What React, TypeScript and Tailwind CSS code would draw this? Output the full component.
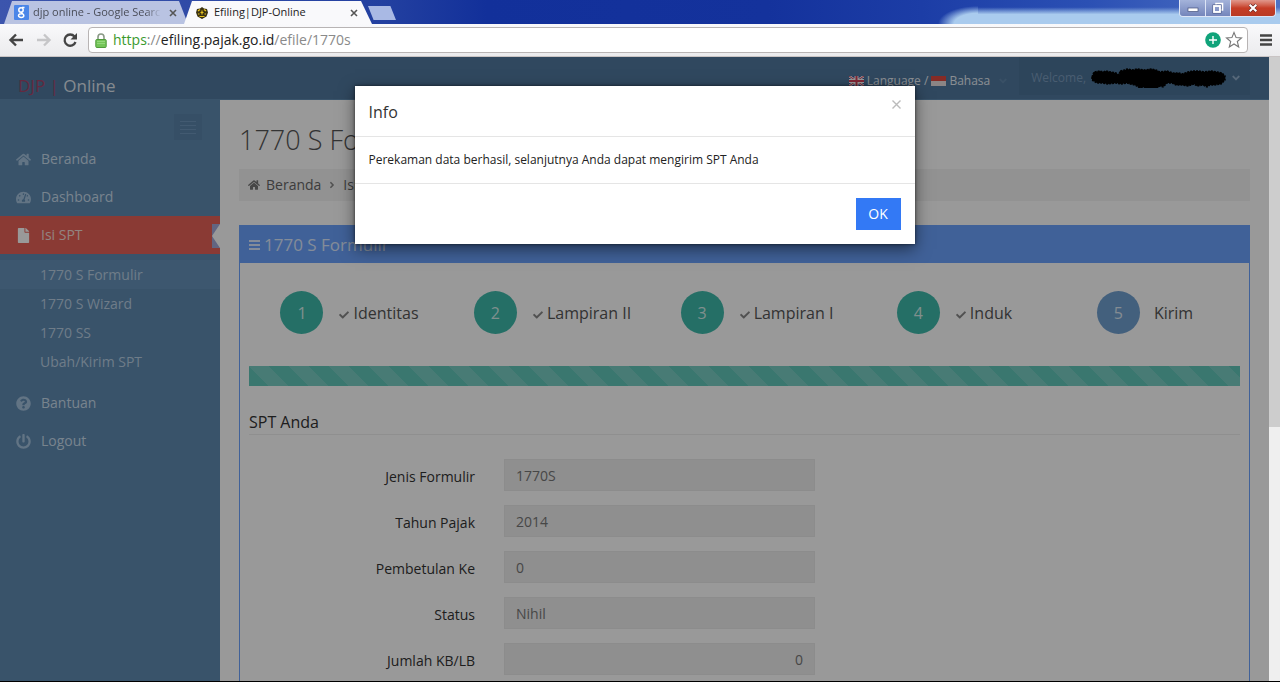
import { useState } from 'react';
import type { ReactNode } from 'react';
import {
  FaAngleDown,
  FaAngleRight,
  FaCheck,
  FaFile,
  FaHome,
  FaPowerOff,
  FaQuestionCircle,
  FaTachometerAlt,
} from 'react-icons/fa';

const steps = [
  { label: 'Identitas', done: true },
  { label: 'Lampiran II', done: true },
  { label: 'Lampiran I', done: true },
  { label: 'Induk', done: true },
  { label: 'Kirim', done: false },
];

const fields = [
  { id: 'jenis', label: 'Jenis Formulir', value: '1770S' },
  { id: 'tahun', label: 'Tahun Pajak', value: '2014' },
  { id: 'pembetulan', label: 'Pembetulan Ke', value: '0' },
  { id: 'status', label: 'Status', value: 'Nihil' },
  { id: 'jumlah', label: 'Jumlah KB/LB', value: '0', alignRight: true },
];

const submenu = ['1770 S Formulir', '1770 S Wizard', '1770 SS', 'Ubah/Kirim SPT'];

function CloseGlyph() {
  return (
    <svg viewBox="0 0 8 8" className="size-2" fill="none" stroke="#555" strokeWidth="1.6">
      <path d="M1 1l6 6M7 1L1 7" />
    </svg>
  );
}

function TabStrip() {
  return (
    <div className="flex h-6 items-end justify-between bg-[linear-gradient(90deg,#3c55ad_0%,#2340a0_30%,#12309a_38%,#14329c_60%,#1c3da6_72%,#2b50b4_85%,#4f72c4_100%)]">
      <div className="flex items-end">
        <div className="ml-1 flex h-[23px] w-[184px] items-center bg-[#b9c3e2] pl-2.5 text-[#4a4d58] [clip-path:polygon(8px_0,175px_0,100%_100%,0_100%)]">
          <svg viewBox="0 0 15 15" className="mr-1 size-[15px] shrink-0">
            <rect width="15" height="15" rx="1" fill="#4a86e8" />
            <g fill="none" stroke="#fff" strokeWidth="1.5">
              <circle cx="7" cy="5" r="2.2" />
              <path d="M8 2.5h2.5M8 7.2c-1.5 1 1.8 1.5 1.8 3.3 0 2.6-5.3 2.6-5.3 0 0-1.5 2-2 4.2-1.8" />
            </g>
          </svg>
          <span className="w-[128px] overflow-hidden text-[11px] whitespace-nowrap [mask-image:linear-gradient(90deg,#000_88%,transparent)]">
            djp online - Google Search
          </span>
          <button aria-label="Close tab" className="ml-2">
            <CloseGlyph />
          </button>
        </div>
        <div className="-ml-1 flex h-[23px] w-[188px] items-center bg-[#f9f9fb] pl-3 text-[#222] [clip-path:polygon(8px_0,177px_0,100%_100%,0_100%)]">
          <svg viewBox="0 0 12 12" className="mr-1.5 size-3 shrink-0">
            <path d="M6 0l2 1.5 3 .5 1 3.5-1.5 4L6 12 1.5 9.500 0 5.500 1 2l3-.5z" fill="#3b3210" />
            <path d="M2 4l2-1.500M8 2.500L10 4M2 7h1.500M8.500 7H10M3.500 9.500h5M6 3.500v4M4.500 5.500h3" stroke="#e8c21c" strokeWidth="1.200" fill="none" />
          </svg>
          <span className="w-[128px] text-[11px] whitespace-nowrap">Efiling|DJP-Online</span>
          <button aria-label="Close tab" className="ml-2">
            <CloseGlyph />
          </button>
        </div>
        <button
          aria-label="New tab"
          className="mb-1 -ml-1 h-3.5 w-7 bg-[#a9b9e4] [clip-path:polygon(0_0,80%_0,100%_100%,20%_100%)]"
        />
      </div>
      <div className="flex h-6 w-[342px] items-start justify-end bg-[radial-gradient(ellipse_40px_18px_at_40px_24px,#a9cbee_60%,transparent),linear-gradient(180deg,transparent_30%,#a9cbee_60%)] [background-size:40px_100%,100%_100%] bg-no-repeat [background-position:0_0,40px_0] pr-1">
        <div className="flex h-[17px] overflow-hidden rounded-b border border-t-0 border-[#dce4f5]">
          <button aria-label="Minimize" className="flex w-[26px] items-center justify-center border-r border-[#dce4f5] bg-linear-to-b from-[#a4b3da] to-[#7485bb]">
            <svg viewBox="0 0 12 12" className="size-3">
              <rect x="1" y="6" width="10" height="3.5" fill="#fff" stroke="#45507c" strokeWidth=".7" />
            </svg>
          </button>
          <button aria-label="Restore" className="flex w-[25px] items-center justify-center border-r border-[#dce4f5] bg-linear-to-b from-[#a4b3da] to-[#7485bb]">
            <svg viewBox="0 0 12 12" className="size-3" fill="none">
              <path d="M4 3.5V1.500h6.500v6.500H8.500" stroke="#fff" strokeWidth="1.600" />
              <rect x="2" y="4" width="6" height="6" stroke="#fff" strokeWidth="1.900" />
              <rect x=".8" y="2.800" width="8.400" height="8.400" stroke="#45507c" strokeWidth=".5" />
            </svg>
          </button>
          <button aria-label="Close" className="flex w-11 items-center justify-center bg-linear-to-b from-[#e0988c] via-[#c63d26] to-[#b93a24]">
            <svg viewBox="0 0 12 12" className="size-2.5">
              <path d="M2 2l8 8M10 2l-8 8" stroke="#5c2320" strokeWidth="4" />
              <path d="M2 2l8 8M10 2l-8 8" stroke="#fff" strokeWidth="2.600" />
            </svg>
          </button>
        </div>
      </div>
    </div>
  );
}

function Toolbar() {
  return (
    <div className="flex h-[33px] items-center border-b border-[#c9c4c4] bg-linear-to-b from-[#f9f9fb] to-[#ebebed] pr-2 pl-2">
      <button aria-label="Back">
        <svg viewBox="0 0 16 16" className="size-4" fill="none" stroke="#444" strokeWidth="2.400">
          <path d="M15 8H3M8 2.500L2.500 8 8 13.500" />
        </svg>
      </button>
      <button aria-label="Forward" className="ml-3">
        <svg viewBox="0 0 16 16" className="size-4" fill="none" stroke="#c6c6c8" strokeWidth="2.400">
          <path d="M1 8h12M8 2.500L13.500 8 8 13.500" />
        </svg>
      </button>
      <button aria-label="Reload" className="ml-2.5">
        <svg viewBox="0 0 16 16" className="size-4" fill="none">
          <path d="M12.500 4.500A5.600 5.600 0 1 0 13.500 10" stroke="#444" strokeWidth="2.300" />
          <path d="M15 1v6.500H8.500z" fill="#444" />
        </svg>
      </button>
      <div className="ml-2.5 flex h-[26px] flex-1 items-center rounded-sm border border-[#b8b4b4] bg-white pr-1 pl-1.5">
        <svg viewBox="0 0 12 15" className="h-[15px] w-3">
          <path d="M3 7V4a3 3 0 0 1 6 0v3" fill="none" stroke="#8a9a86" strokeWidth="1.600" />
          <rect x=".8" y="6.500" width="10.400" height="8" rx="1" fill="#74c558" stroke="#4f9a3b" />
          <path d="M2 8.500h8M2 10.500h8" stroke="#9bdc84" strokeWidth=".8" />
        </svg>
        <div className="ml-1.5 flex-1 text-sm text-[#8a8a8a]">
          <span className="text-[#3a9a2c]">https</span>://<span className="text-[#222]">efiling.pajak.go.id</span>/efile/1770s
        </div>
        <svg viewBox="0 0 16 16" className="mr-1 size-4">
          <circle cx="8" cy="8" r="7.800" fill="#10a37a" />
          <path d="M8 4v8M4 8h8" stroke="#fff" strokeWidth="1.400" />
        </svg>
        <svg viewBox="0 0 18 18" className="size-[18px]">
          <path d="M9 1.500l2.100 5.100 5.400.4-4.200 3.500 1.400 5.500L9 13l-4.700 3 1.400-5.500L1.500 7l5.400-.4z" fill="#fff" stroke="#777" strokeWidth="1.100" />
        </svg>
      </div>
      <button aria-label="Menu" className="ml-3">
        <svg viewBox="0 0 12 12" className="size-3" stroke="#444" strokeWidth="2.400">
          <path d="M0 1.500h12M0 6h12M0 10.500h12" />
        </svg>
      </button>
    </div>
  );
}

function FlagUk() {
  return (
    <svg viewBox="0 0 15 10" className="h-2.5 w-[15px]">
      <rect width="15" height="10" fill="#39539c" />
      <path d="M0 0l15 10M15 0L0 10" stroke="#fff" strokeWidth="2.500" />
      <path d="M0 0l15 10M15 0L0 10" stroke="#d8425a" strokeWidth="1" />
      <path d="M7.500 0v10M0 5h15" stroke="#fff" strokeWidth="4" />
      <path d="M7.500 0v10M0 5h15" stroke="#d8425a" strokeWidth="2" />
    </svg>
  );
}

function FlagId() {
  return (
    <svg viewBox="0 0 15 10" className="h-2.5 w-[15px]">
      <rect width="15" height="10" fill="#e8dede" />
      <rect width="15" height="5" fill="#e0483f" />
    </svg>
  );
}

function Header() {
  return (
    <header className="flex h-[43px] items-start justify-between border-b border-[#5f8ab1] bg-[#50789e] pr-[19px] pl-[18px]">
      <a href="#" className="pt-[17px] text-[17px] leading-6 text-[#dfe6ee]">
        <span className="text-[#a4466c]">DJP |</span> Online
      </a>
      <div className="flex">
        <button className="flex h-[38px] items-center gap-[3px] pt-2.5 pr-2.5 text-xs text-[#e6edf5]">
          <FlagUk />
          <span>Language /</span>
          <FlagId />
          <span>Bahasa</span>
          <FaAngleDown className="ml-1 size-3 text-[#6086aa]" />
        </button>
        <button className="flex h-[38px] items-center bg-[#4c7498] pt-1 pr-2 pl-3 text-xs text-[#7b9bbd]">
          <span>Welcome,</span>
          <svg viewBox="0 0 138 20" className="mr-0.5 ml-1 h-5 w-[138px]">
            <path
              d="M2 9l2-5 6-1 3 1 3-1 5 1 5 1 3 2 1-4 5-1 2-1 6 1 4-1 8 1 6-1 5 1 4 2 7-1 6 2 6 0 3 1 6-2 5-1 6 0 5 1 7-1 6 1 5 1 3 3 0 4-4 4-7 1-4 0-3 2-4-2-6 1-3-2-6 2-6-1-6 0-4-2-5 0-4 4-3-1-4 3-6-1-3 2-3-3-4 1-5-3-5-1-3-1-6 1-5-1-8 1-6-1-5 0-5-3z"
              fill="#000"
              stroke="#000"
              strokeWidth="1.500"
              strokeDasharray="2 1"
            />
          </svg>
          <FaAngleDown className="size-3 text-[#91aecb]" />
        </button>
      </div>
    </header>
  );
}

function MenuItem({ icon, label, active }: { icon: ReactNode; label: string; active?: boolean }) {
  return (
    <a
      href="#"
      className={
        active
          ? 'relative flex h-[38px] items-center gap-2.5 bg-[#e76257] pl-4 text-sm text-[#f4dcd8]'
          : 'flex h-[38px] items-center gap-2.5 pl-4 text-sm text-[#c9dcec]'
      }
    >
      <span className={active ? 'text-[#fff]' : 'text-[#a3c1dc]'}>{icon}</span>
      {label}
      {active && (
        <svg viewBox="0 0 8 24" className="absolute top-2 right-0 h-6 w-2">
          <rect width="8" height="24" fill="#a3a8d8" />
          <path d="M8 0v24L0 12z" fill="#fff" />
        </svg>
      )}
    </a>
  );
}

function Sidebar() {
  return (
    <nav className="w-[220px] shrink-0 bg-[#5f8ab1]">
      <div className="flex h-10 justify-end pt-3.5 pr-[18px]">
        <button aria-label="Toggle menu" className="flex h-[26px] w-7 items-center justify-center bg-[#5a84ab]">
          <svg viewBox="0 0 16 13" className="h-[13px] w-4" stroke="#6f97bd">
            <path d="M0 .5h16M0 4.500h16M0 8.500h16M0 12.500h16" />
          </svg>
        </button>
      </div>
      <MenuItem icon={<FaHome className="size-[15px]" />} label="Beranda" />
      <MenuItem icon={<FaTachometerAlt className="size-[15px]" />} label="Dashboard" />
      <MenuItem icon={<FaFile className="size-[15px]" />} label="Isi SPT" active />
      <ul className="pt-1.5 pb-2 text-sm text-[#b9cfe3]">
        {submenu.map((item, i) => (
          <li key={item}>
            <a href="#" className={i === 0 ? 'flex h-[29px] items-center bg-[#6792b9] pl-10' : 'flex h-[29px] items-center pl-10'}>
              {item}
            </a>
          </li>
        ))}
      </ul>
      <MenuItem icon={<FaQuestionCircle className="size-[15px]" />} label="Bantuan" />
      <MenuItem icon={<FaPowerOff className="size-[15px]" />} label="Logout" />
    </nav>
  );
}

function Wizard() {
  return (
    <ol className="grid grid-cols-[201fr_205fr_204fr_191fr_190fr] pt-7">
      {steps.map((step, i) => (
        <li key={step.label} className="flex items-center justify-center text-base text-[#555]">
          <span
            className={
              step.done
                ? 'mr-4 flex size-[43px] items-center justify-center rounded-full bg-[#3eb9aa] text-[#d5efec]'
                : 'mr-3.5 flex size-[43px] items-center justify-center rounded-full bg-[#70a0d0] text-[#dce8f4]'
            }
          >
            {i + 1}
          </span>
          {step.done && <FaCheck className="mt-1 mr-1 size-2.5 text-[#888]" />}
          {step.label}
        </li>
      ))}
    </ol>
  );
}

function FormPanel() {
  return (
    <section className="mt-6 flex-1 border border-b-0 border-[#6ca2fd]">
      <h2 className="flex h-[37px] items-center gap-1 bg-[#6ca2fd] pl-[9px] text-[17px] text-[#dce9ff]">
        <svg viewBox="0 0 11 10" className="h-2.5 w-[11px]" stroke="#dce9ff" strokeWidth="2">
          <path d="M0 1h11M0 5h11M0 9h11" />
        </svg>
        1770 S Formulir
      </h2>
      <div className="px-[9px]">
        <Wizard />
        <div
          role="progressbar"
          aria-valuenow={100}
          className="mt-8 h-5 bg-[#62c6b9] bg-[linear-gradient(45deg,rgba(255,255,255,.15)_25%,transparent_25%,transparent_50%,rgba(255,255,255,.15)_50%,rgba(255,255,255,.15)_75%,transparent_75%,transparent)] bg-[size:40px_40px]"
        />
        <h3 className="mt-6 border-b border-[#eee] text-base text-[#333]">SPT Anda</h3>
        <form className="mt-6 flex flex-col gap-3.5 pb-[5px]">
          {fields.map((field) => (
            <div key={field.id} className="grid grid-cols-[226fr_311fr_396fr] gap-x-[29px]">
              <label htmlFor={field.id} className="pt-2 text-right text-sm text-[#333]">
                {field.label}
              </label>
              <input
                id={field.id}
                readOnly
                value={field.value}
                className={
                  field.alignRight
                    ? 'h-8 w-full min-w-0 border border-[#e9e9e9] bg-[#eee] px-[11px] text-right text-sm text-[#777]'
                    : 'h-8 w-full min-w-0 border border-[#e9e9e9] bg-[#eee] px-[11px] text-sm text-[#777]'
                }
              />
            </div>
          ))}
        </form>
      </div>
    </section>
  );
}

function InfoDialog({ onClose }: { onClose: () => void }) {
  return (
    <div className="absolute inset-0 bg-black/40">
      <div
        role="dialog"
        aria-labelledby="info-title"
        className="mx-auto mt-[29px] w-[560px] max-w-full bg-white shadow-[0_5px_15px_rgba(0,0,0,.5),0_0_3px_rgba(0,0,0,.6)]"
      >
        <div className="flex items-start justify-between border-b border-[#e5e5e5] px-3.5 pt-3.5 pb-3">
          <h4 id="info-title" className="text-base text-[#333]">
            Info
          </h4>
          <button aria-label="Close" onClick={onClose}>
            <svg viewBox="0 0 9 9" className="size-[9px]" stroke="#bbb" strokeWidth="1.400">
              <path d="M.5.5l8 8M8.500.5l-8 8" />
            </svg>
          </button>
        </div>
        <p className="px-3.5 py-3 text-xs leading-[22px] text-[#222]">
          Perekaman data berhasil, selanjutnya Anda dapat mengirim SPT Anda
        </p>
        <div className="flex justify-end border-t border-[#e5e5e5] p-3.5">
          <button onClick={onClose} className="h-8 w-[45px] bg-[#3379f5] text-sm text-white">
            OK
          </button>
        </div>
      </div>
    </div>
  );
}

export default function App() {
  const [open, setOpen] = useState(true);

  return (
    <div className="flex min-h-screen flex-col border-b border-black bg-[#efefef] font-['Open_Sans','Noto_Sans',sans-serif]">
      <TabStrip />
      <Toolbar />
      <div className="flex flex-1">
        <div className="relative flex min-w-0 flex-1 flex-col bg-white">
          <Header />
          <div className="flex flex-1">
            <Sidebar />
            <main className="flex min-w-0 flex-1 flex-col px-[19px]">
              <h1 className="mt-5 text-[27px] leading-10 font-light text-[#555]">1770 S Formulir</h1>
              <div className="mt-[9px] flex h-8 items-center gap-1.5 bg-[#f3f3f3] pl-[9px] text-sm text-[#666]">
                <FaHome className="size-3 text-[#777]" />
                <a href="#">Beranda</a>
                <FaAngleRight className="size-2.5 text-[#888]" />
                <a href="#">Isi SPT</a>
              </div>
              <FormPanel />
            </main>
          </div>
          {open && <InfoDialog onClose={() => setOpen(false)} />}
        </div>
        <div className="w-[11px] bg-[#efefef]">
          <div className="h-[370px] bg-[#cdcdcd]" />
        </div>
      </div>
    </div>
  );
}
